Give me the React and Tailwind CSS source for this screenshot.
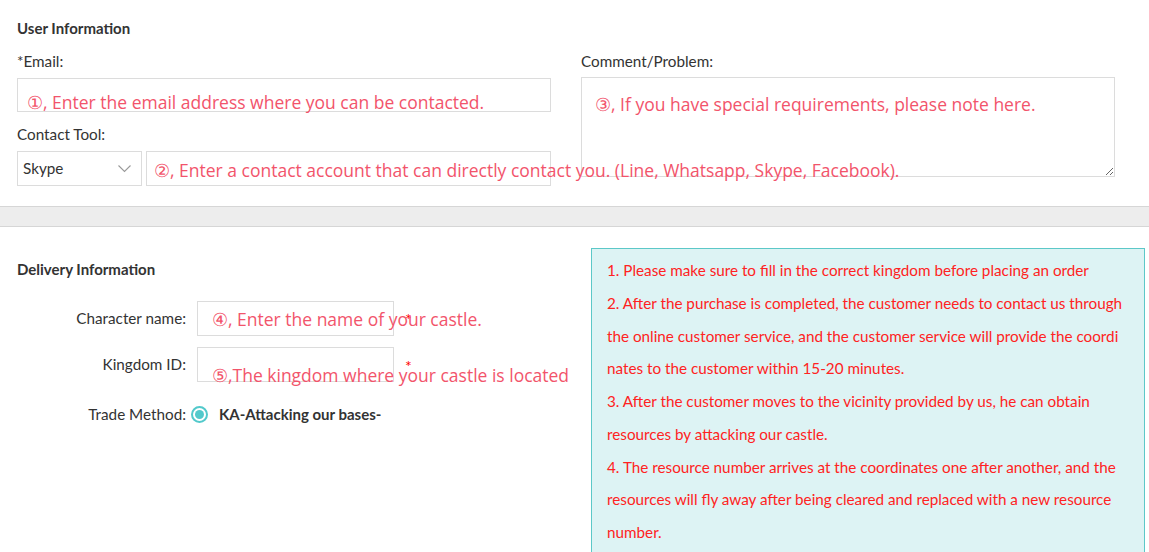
import React from "react";

const red = "text-[#f2546b]";
const redFont = { fontFamily: '"Open Sans", "Noto Sans", sans-serif' };

function Overlay({ children, className }) {
  return (
    <span
      className={`absolute whitespace-nowrap pointer-events-none text-[17.5px] leading-[23px] ${red} ${className}`}
      style={redFont}
    >
      {children}
    </span>
  );
}

export default function App() {
  const lines = [
    "1. Please make sure to fill in the correct kingdom before placing an order",
    "2. After the purchase is completed, the customer needs to contact us through",
    "the online customer service, and the customer service will provide the coordi",
    "nates to the customer within 15-20 minutes.",
    "3. After the customer moves to the vicinity provided by us, he can obtain",
    "resources by attacking our castle.",
    "4. The resource number arrives at the coordinates one after another, and the",
    "resources will fly away after being cleared and replaced with a new resource",
    "number.",
  ];
  return (
    <div
      className="w-[1149px] h-[552px] overflow-hidden bg-white text-[#333]"
      style={{ fontFamily: 'Lato, "Liberation Sans", sans-serif' }}
    >
      {/* User information */}
      <div className="flex items-start pl-[17px] pt-[18px]">
        <div className="w-[534px] shrink-0">
          <div className="h-[20px] leading-[20px] text-[15px] font-bold">User Information</div>
          <div className="mt-[13px] h-[20px] leading-[20px] text-[15.25px]">*Email:</div>
          <div className="relative mt-[7px] h-[34px] border border-[#dcdcdc] bg-white">
            <Overlay className="left-[9px] top-[12px]">①, Enter the email address where you can be contacted.</Overlay>
          </div>
          <div className="mt-[12px] h-[20px] leading-[20px] text-[15.25px]">Contact Tool:</div>
          <div className="mt-[7px] flex gap-[4px]">
            <div className="w-[125px] h-[35px] border border-[#dcdcdc] flex items-center justify-between pl-[5px] pr-[10px] text-[15.25px]">
              <span>Skype</span>
              <svg width="13" height="8" viewBox="0 0 13 8" fill="none">
                <polyline points="0.5,0.5 6.5,6.5 12.5,0.5" stroke="#999" strokeWidth="1.1" />
              </svg>
            </div>
            <div className="relative flex-1 h-[35px] border border-[#dcdcdc] z-10">
              <Overlay className="left-[7px] top-[7px]">
                ②, Enter a contact account that can directly contact you. (Line, Whatsapp, Skype, Facebook).
              </Overlay>
            </div>
          </div>
        </div>
        <div className="ml-[30px] w-[534px] shrink-0 mt-[33px]">
          <div className="h-[20px] leading-[20px] text-[15.25px]">Comment/Problem:</div>
          <div className="relative mt-[6px] h-[100px]">
            <textarea className="block w-full h-full border border-[#dcdcdc] bg-white outline-none" />
            <Overlay className="left-[14px] top-[16px]">③, If you have special requirements, please note here.</Overlay>
          </div>
        </div>
      </div>

      {/* separator band */}
      <div className="mt-[20px] h-[21px] bg-[#ededed] border-t border-b border-[#d6d6d6]" />

      {/* Delivery information */}
      <div className="flex items-start pt-[21px]">
        <div className="w-[591px] shrink-0 pl-[17px]">
          <div className="mt-[11px] h-[20px] leading-[20px] text-[15px] font-bold">Delivery Information</div>
          <div className="mt-[22px] flex items-start">
            <div className="w-[169px] h-[35px] leading-[35px] text-right text-[15.25px]">Character name:</div>
            <div className="relative ml-[11px] w-[197px] h-[35px] border border-[#dcdcdc]">
              <Overlay className="left-[14px] top-[6px]">④, Enter the name of your castle.</Overlay>
            </div>
            <span className="ml-[11px] mt-[10px] text-[16px] leading-[16px] text-[#f00]">*</span>
          </div>
          <div className="mt-[11px] flex items-start">
            <div className="w-[169px] h-[35px] leading-[35px] text-right text-[15.25px]">Kingdom ID:</div>
            <div className="relative ml-[11px] w-[197px] h-[35px] border border-[#dcdcdc]">
              <Overlay className="left-[14px] top-[16px]">⑤,The kingdom where your castle is located</Overlay>
            </div>
            <span className="ml-[11px] mt-[11px] text-[16px] leading-[16px] text-[#f00]">*</span>
          </div>
          <div className="mt-[22px] flex items-center h-[20px]">
            <div className="w-[169px] text-right text-[15.25px]">Trade Method:</div>
            <span className="ml-[5px] w-[17px] h-[17px] rounded-full border-2 border-[#52c9cb] flex items-center justify-center">
              <span className="w-[9px] h-[9px] rounded-full bg-[#52c9cb]" />
            </span>
            <span className="ml-[11px] text-[15px] font-bold">KA-Attacking our bases-</span>
          </div>
        </div>
        <div className="flex-1 mr-[4px] h-[320px] border border-[#5cc8c8] bg-[#ddf3f4] pl-[15px] pt-[5px] text-[15.25px] leading-[32.75px] text-[#ff2222]">
          {lines.map((l, i) => (
            <div key={i} className="whitespace-nowrap">{l}</div>
          ))}
        </div>
      </div>
    </div>
  );
}
